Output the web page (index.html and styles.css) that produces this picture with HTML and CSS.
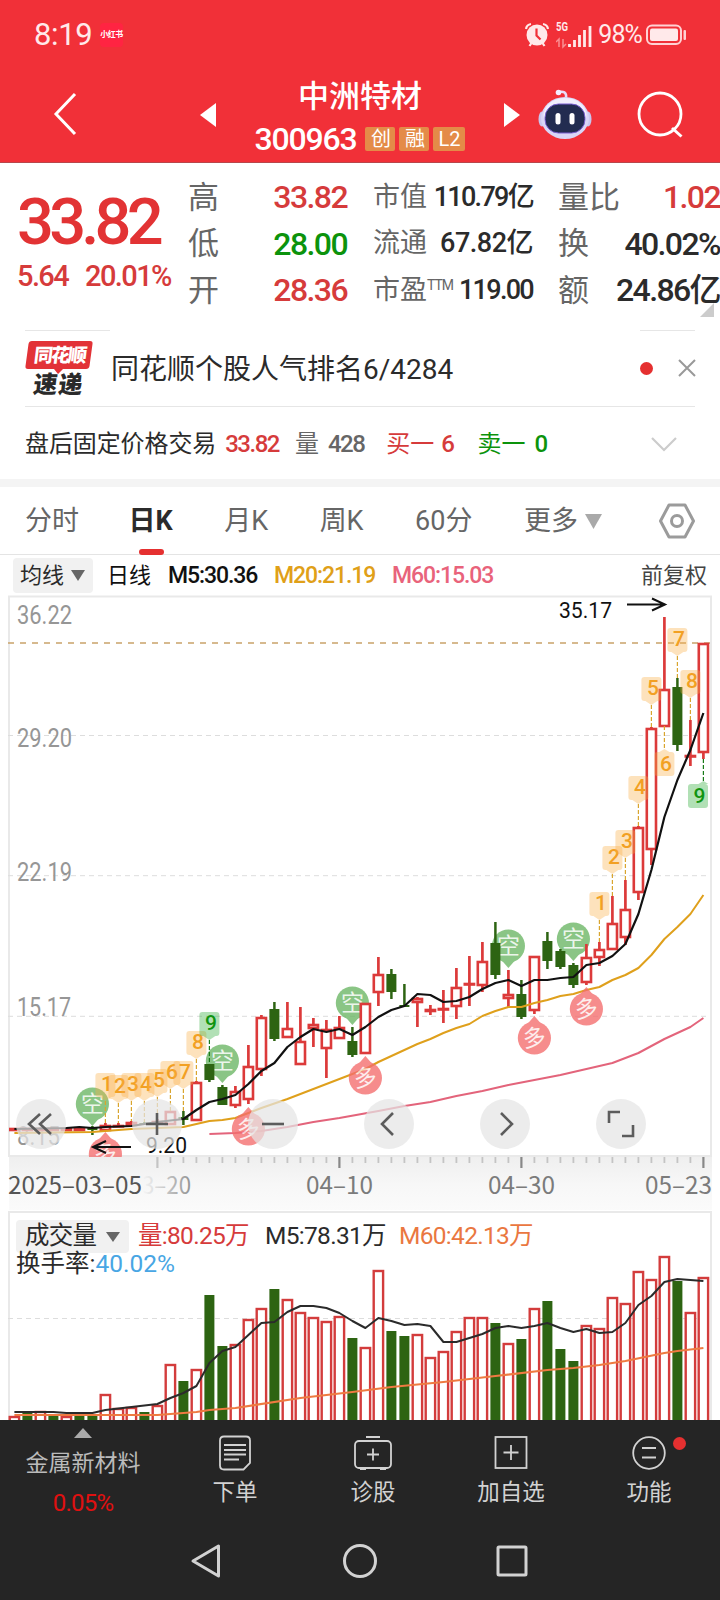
FILE: index.html
```
<!DOCTYPE html>
<html lang="zh-CN">
<head>
  <meta charset="UTF-8" />
  <meta name="viewport" content="width=device-width, initial-scale=1.0" />
  <title>中洲特材 300963</title>
  <link rel="stylesheet" href="styles.css">
</head>
<body>
  <!-- Header -->
  <header class="header">
    <div class="status">
      <span class="clock">8:19</span>
      <span class="app-badge">小红书</span>
      <svg class="alarm" width="24" height="30" viewBox="0 0 24 30">
        <circle cx="12" cy="15" r="10.5" fill="#ffe9ea"/>
        <path d="M1 9a6 6 0 0 1 5-5M23 9a6 6 0 0 0-5-5M4.500 26l2-3M19.500 26l-2-3" stroke="#ffe9ea" stroke-width="2.200" fill="none"/>
        <path d="M11.500 8.500v7l4 4" stroke="#f13038" stroke-width="2.200" fill="none"/>
      </svg>
      <svg class="signal" width="36" height="32" viewBox="0 0 36 32">
        <text x="0" y="12" font-size="13" font-weight="700" fill="#ffe9ea" textLength="12" lengthAdjust="spacingAndGlyphs">5G</text>
        <path d="M3 28v-8l-3 3M7 20v8l3-3" stroke="#f98e92" stroke-width="1.500" fill="none"/>
        <path d="M13.500 28v-3M18.500 28v-7M23.500 28v-12M28.500 28V11M34 28V7" stroke="#ffe9ea" stroke-width="2.800"/>
      </svg>
      <span class="battery-text">98%</span>
      <svg width="42" height="22" viewBox="0 0 42 22">
        <rect x="2" y="1.500" width="34" height="18.500" rx="5" fill="none" stroke="#ffd2d4" stroke-width="2"/>
        <rect x="5" y="4.500" width="28" height="12.500" rx="2" fill="#ffe9ea"/>
        <rect x="38.500" y="6" width="2.500" height="10" rx="1" fill="#ffd2d4"/>
      </svg>
    </div>
    <div class="title-bar">
      <svg class="back" width="24" height="44" viewBox="0 0 24 44"><path d="M22 2L3 22l19 20" fill="none" stroke="#fff" stroke-width="3"/></svg>
      <svg class="prev" width="16" height="24" viewBox="0 0 16 24"><path d="M0 12L16 0v24z" fill="#fff"/></svg>
      <div class="stock">
        <div class="stock-name">中洲特材</div>
        <div class="stock-code">300963<i>创</i><i>融</i><i>L2</i></div>
      </div>
      <svg class="next" width="16" height="24" viewBox="0 0 16 24"><path d="M16 12L0 0v24z" fill="#fff"/></svg>
      <svg class="robot" width="56" height="52" viewBox="0 0 56 52">
        <path d="M28 10C29 4 25 3 21 4" fill="none" stroke="#e9dcf8" stroke-width="2.500"/>
        <circle cx="20.500" cy="4.500" r="2.800" fill="#f4ecff"/>
        <ellipse cx="4" cy="31" rx="3.500" ry="7.500" fill="#c9c6ee"/>
        <ellipse cx="50" cy="31" rx="3.500" ry="7.500" fill="#c9c6ee"/>
        <ellipse cx="27" cy="30" rx="24" ry="21" fill="#d9d5f6"/>
        <ellipse cx="27" cy="27" rx="21.500" ry="17" fill="#f1effd"/>
        <rect x="7" y="16" width="40" height="29" rx="13.500" fill="#222c50" stroke="#7a5fd0" stroke-width="1"/>
        <rect x="17.500" y="25" width="5" height="11.500" rx="2.500" fill="#fff"/>
        <rect x="31.500" y="25" width="5" height="11.500" rx="2.500" fill="#fff"/>
      </svg>
      <svg class="search" width="48" height="48" viewBox="0 0 48 48"><circle cx="24" cy="23" r="21" fill="none" stroke="#fff" stroke-width="2.800"/><path d="M36 37l9.500 8.500" stroke="#fff" stroke-width="3"/></svg>
    </div>
  </header>

  <!-- Quote -->
  <section class="quote">
    <div class="price-box">
      <div class="price">33.82</div>
      <div class="change"><span>5.64</span><span>20.01%</span></div>
    </div>
    <dl class="col col-a">
      <dt>高</dt><dd class="red">33.82</dd>
      <dt>低</dt><dd class="green">28.00</dd>
      <dt>开</dt><dd class="red">28.36</dd>
    </dl>
    <dl class="col col-b">
      <dt>市值</dt><dd>110.79亿</dd>
      <dt>流通</dt><dd class="wide">67.82亿</dd>
      <dt>市盈<sup>TTM</sup></dt><dd>119.00</dd>
    </dl>
    <dl class="col col-c">
      <dt>量比</dt><dd class="red">1.02</dd>
      <dt>换</dt><dd>40.02%</dd>
      <dt>额</dt><dd>24.86亿</dd>
    </dl>
    <span class="corner"></span>
  </section>

  <!-- News ticker -->
  <section class="notice">
    <svg class="logo" width="68" height="56" viewBox="0 0 68 56">
      <path d="M7 1h58q3 0 2.500 3l-3 22q-.5 3-3.500 3H38l-5 5-4-5H3q-3 0-2.500-3l3-22Q4 1 7 1z" fill="#e23237"/>
      <g font-weight="900" transform="skewX(-7)">
        <text x="11" y="22.500" font-size="19" fill="#fff" textLength="53">同花顺</text>
        <text x="14" y="53" font-size="24" fill="#2a2a2a" textLength="49">速递</text>
      </g>
    </svg>
    <span class="notice-text">同花顺个股人气排名6/4284</span>
    <span class="dot"></span>
    <svg width="18" height="18" viewBox="0 0 18 18"><path d="M1 1l16 16M17 1L1 17" stroke="#999" stroke-width="2"/></svg>
  </section>

  <section class="after-hours">
    <span class="ah-title">盘后固定价格交易</span>
    <b class="red ah-price">33.82</b>
    <span class="grey">量</span><b class="grey ah-vol">428</b>
    <span class="red">买一</span><b class="red ah-buy">6</b>
    <span class="green">卖一</span><b class="green">0</b>
    <svg width="26" height="15" viewBox="0 0 26 15"><path d="M1 1l12 12L25 1" fill="none" stroke="#ccc" stroke-width="2.200"/></svg>
  </section>

  <!-- Period tabs -->
  <nav class="tabs">
    <span>分时</span>
    <span class="active">日K</span>
    <span>月K</span>
    <span>周K</span>
    <span>60分</span>
    <span class="more">更多<svg width="17" height="15" viewBox="0 0 17 15"><path d="M0 0h17L8.500 15z" fill="#a9a9a9"/></svg></span>
    <svg width="36" height="36" viewBox="0 0 36 36"><path d="M10 2h16l8.500 16L26 34H10L1.500 18z" fill="none" stroke="#9b9b9b" stroke-width="3" stroke-linejoin="round"/><circle cx="18" cy="18" r="5.500" fill="none" stroke="#9b9b9b" stroke-width="3"/></svg>
  </nav>

  <div class="legend">
    <span class="select">均线<svg width="14" height="11" viewBox="0 0 14 11"><path d="M0 0h14L7 11z" fill="#666"/></svg></span>
    <span class="l-day">日线</span>
    <span class="l-m5">M5:30.36</span>
    <span class="l-m20">M20:21.19</span>
    <span class="l-m60">M60:15.03</span>
    <span class="l-adj">前复权</span>
  </div>

  <svg id="kline" width="720" height="616" viewBox="0 594 720 616"></svg>

  <div class="volume">
    <svg id="volChart" width="720" height="210" viewBox="0 1210 720 210"></svg>
    <div class="vol-legend">
      <span class="select">成交量<svg width="14" height="10" viewBox="0 0 14 10"><path d="M0 0h14L7 10z" fill="#666"/></svg></span>
      <span class="v-now">量:80.25万</span>
      <span class="v-m5">M5:78.31万</span>
      <span class="v-m60">M60:42.13万</span>
      <div class="turnover">换手率:<em>40.02%</em></div>
    </div>
  </div>

  <!-- Bottom bar -->
  <footer class="footer">
    <div class="actions">
      <div class="sector">
        <svg width="18" height="10" viewBox="0 0 18 10"><path d="M9 0l9 10H0z" fill="#aaa"/></svg>
        <span>金属新材料</span>
        <span class="pct">0.05%</span>
      </div>
      <div class="action">
        <svg width="36" height="36" viewBox="0 0 36 36"><path d="M7 1.500h22q4 0 4 4V28l-6.500 6.500H7q-4 0-4-4v-25q0-4 4-4z"/><path d="M7 10h22M7 15h22M7 19.500h22M7 24.500h15"/></svg>
        下单
      </div>
      <div class="action">
        <svg width="38" height="36" viewBox="0 0 38 36"><rect x="1" y="6" width="36" height="27" rx="4"/><path d="M12 2h14M19 13.500v12M13 19.500h12M6 34h6M26 34h6"/></svg>
        诊股
      </div>
      <div class="action">
        <svg width="34" height="36" viewBox="0 0 34 36"><rect x="1.500" y="2" width="31" height="31"/><path d="M17 10v15M9.500 17.500h15"/></svg>
        加自选
      </div>
      <div class="action">
        <svg width="34" height="36" viewBox="0 0 34 36"><circle cx="17" cy="18" r="15.800"/><path d="M10 13h14M10 22.500h14"/></svg>
        功能
        <i class="red-dot"></i>
      </div>
    </div>
    <div class="sysnav">
      <svg width="32" height="36" viewBox="0 0 32 36"><path d="M28.500 3v30L3 18z"/></svg>
      <svg width="36" height="36" viewBox="0 0 36 36"><circle cx="19" cy="18" r="15.500"/></svg>
      <svg width="32" height="36" viewBox="0 0 32 36"><rect x="2" y="4" width="28" height="28" rx="1"/></svg>
    </div>
  </footer>

  <script>
    const RED = '#dc3a3a', GREEN = '#2d6412';
    const cx = i => 14.4 + 13 * i;

    // [color, high, body top, body bottom, low]
    const candles = [
      ['r',1128,1128,1130,1131],['r',1128,1128,1130,1130],['r',1128,1128,1130,1130],['r',1128,1128,1130,1130],
      ['r',1128,1128,1130,1130],['r',1127,1128,1130,1130],['g',1126,1127,1130,1135],['r',1123,1125,1130,1131],
      ['r',1123,1125,1126,1127],['r',1121,1122,1125,1126],['g',1122,1123,1125,1125],['r',1119,1121,1123,1124],
      ['r',1111,1111,1124,1125],['g',1111,1117,1120,1125],['r',1081,1082,1120,1120],['g',1064,1064,1080,1082],
      ['g',1085,1087,1105,1105],['r',1086,1091,1105,1108],['r',1045,1066,1099,1104],['r',1015,1017,1069,1076],
      ['g',1002,1009,1039,1041],['r',1002,1028,1037,1037],['r',1007,1041,1064,1064],['r',1018,1024,1028,1047],
      ['r',1020,1029,1048,1078],['r',1016,1027,1038,1039],['g',1027,1041,1055,1057],['r',1003,1003,1053,1053],
      ['r',957,974,992,1006],['g',969,974,992,999],['g',984,1005,1007,1007],['r',997,998,1002,1027],
      ['r',1005,1009,1011,1015],['r',990,1008,1008,1023],['r',968,987,1006,1019],['r',956,983,983,1006],
      ['r',942,961,985,992],['g',922,943,975,979],['r',970,994,998,1007],['g',980,994,1017,1019],
      ['r',956,956,1010,1014],['g',932,941,961,969],['g',949,951,967,969],['g',963,965,985,988],
      ['r',944,957,982,985],['r',942,949,957,966],['r',896,923,949,949],['r',880,909,937,945],
      ['r',826,827,892,900],['r',727,728,849,865],['r',617,689,726,726],['g',678,687,745,751],
      ['r',720,755,755,766],['r',643,643,752,759]
    ];

    const volumes = [
      1416,1413,1411,1415,1416,1415,1414,1394,1408,1407,1412,1405,1364,1381,1369,1295,1346,1344,
      1319,1308,1289,1299,1312,1317,1321,1316,1338,1347,1270,1331,1336,1334,1357,1351,1331,1317,
      1317,1323,1343,1339,1308,1301,1349,1361,1325,1328,1297,1303,1271,1279,1256,1281,1312,1277
    ];
    const volGreen = [1,3,5,6,10,13,15,16,20,26,29,30,37,39,41,42,43,51];

    // Moving averages, [index, y]
    const ma5 = [[0,1129],[4,1128],[5,1127],[6,1128],[7,1127],[9,1126],[11,1122],[13,1119],[14,1110],[15,1102],[16,1099],
      [17,1095],[18,1084],[19,1071],[20,1063],[21,1047],[22,1037],[23,1029],[24,1032],[25,1029],[26,1035],[27,1027],
      [28,1017],[29,1010],[30,1006],[31,994],[32,995],[33,1002],[34,1001],[35,997],[36,989],[37,983],[38,980],[39,986],
      [40,980],[41,980],[42,978],[43,977],[44,965],[45,963],[46,956],[47,944],[48,914],[49,870],[50,817],[51,780],[52,750],[53,713]];
    const ma20 = [[0,1133],[6,1132],[9,1129],[13,1127],[14,1124],[15,1121],[16,1120],[17,1118],[18,1113],[19,1108],[21,1099],
      [23,1089],[25,1079],[27,1069],[28,1062],[29,1056],[30,1050],[31,1044],[32,1039],[33,1033],[34,1028],[35,1024],
      [36,1016],[37,1011],[38,1007],[39,1007],[40,1003],[41,1000],[42,996],[43,994],[44,990],[45,987],[46,980],[47,975],
      [48,968],[49,955],[50,939],[51,927],[52,914],[53,895]];
    const ma60 = [[15,1134],[17,1133],[19,1131],[21,1127],[23,1122],[25,1118],[28,1111],[30,1106],[32,1102],[34,1096],
      [36,1091],[38,1085],[40,1080],[42,1075],[44,1069],[46,1063],[48,1053],[50,1039],[52,1027],[53,1018]];
    const vma5 = [[0,1412],[3,1412],[4,1413],[6,1413],[7,1410],[9,1407],[11,1404],[12,1398],[13,1393],[14,1386],[15,1363],
      [16,1351],[17,1347],[18,1335],[19,1323],[20,1322],[21,1312],[22,1306],[23,1306],[24,1308],[25,1313],[26,1321],
      [27,1328],[28,1318],[29,1321],[30,1325],[31,1324],[32,1326],[33,1342],[34,1342],[35,1338],[36,1334],[37,1328],
      [38,1326],[39,1328],[40,1326],[41,1323],[42,1328],[43,1332],[44,1329],[45,1333],[46,1332],[47,1323],[48,1305],
      [49,1296],[50,1282],[51,1279],[53,1281]];
    const vma60 = [[0,1415],[11,1415],[14,1412],[15,1410],[17,1408],[22,1398],[26,1392],[29,1387],[33,1382],[37,1376],
      [41,1370],[43,1368],[45,1365],[47,1361],[50,1353],[51,1351],[53,1348]];

    // Sequence tags: [index, digit, top, below candle]
    const tags = [[7,1,1073],[8,2,1075],[9,3,1073],[10,4,1073],[11,5,1069],[12,6,1061],[13,7,1061],[14,8,1031],[15,9,1012],
      [45,1,892],[46,2,846],[47,3,830],[48,4,776],[49,5,677],[50,6,752,1],[51,7,628],[52,8,670],[53,9,784,1]];
    const pins = [[6,'空',1104],[16,'空',1061],[26,'空',1003],[38,'空',946],[43,'空',939],
      [7,'多',1154],[18,'多',1129],[27,'多',1078],[40,'多',1038],[44,'多',1009]];

    const text = (x, y, w, size, fill, s, extra = '') =>
      `<text x="${x}" y="${y}" font-size="${size}" fill="${fill}" textLength="${w}" lengthAdjust="spacingAndGlyphs" ${extra}>${s}</text>`;
    const line = (pts, color, w = 2) =>
      `<polyline points="${pts.map(p => cx(p[0]) + ',' + p[1]).join(' ')}" fill="none" stroke="${color}" stroke-width="${w}" stroke-linejoin="round"/>`;
    const hline = (y, color, dash, w = 1) =>
      `<path d="M8 ${y}H710" stroke="${color}" stroke-width="${w}" stroke-dasharray="${dash}"/>`;

    function drawCandle([c, hi, top, bot, lo], i) {
      const x = cx(i);
      if (c === 'g') {
        return `<path d="M${x} ${hi}V${lo}" stroke="${GREEN}" stroke-width="2.500"/>
          <rect x="${x - 5}" y="${top}" width="10" height="${bot - top}" fill="${GREEN}"/>`;
      }
      return `<path d="M${x} ${hi}V${top}M${x} ${bot}V${lo}" stroke="${RED}" stroke-width="2.700"/>
        <rect x="${x - 4.6}" y="${top + 1}" width="9.200" height="${Math.max(bot - top - 1, 0.5)}" fill="${bot - top < 3 ? RED : '#fff'}" stroke="${RED}" stroke-width="2.600"/>`;
    }

    function drawTag([i, n, top, below]) {
      const c = n === 9 ? '#109410' : '#f2a023';
      const bg = n === 9 ? 'rgba(40,170,50,.36)' : 'rgba(250,175,70,.36)';
      const x = cx(i), bx = Math.min(x - 10, 688);
      const stem = below ? `M${x} ${candles[i][4]}V${top - 2}` : `M${x} ${top + 28}V${candles[i][1]}`;
      const tail = below ? `M${x - 5} ${top}l5-3 5 3z` : `M${x - 6} ${top + 24}h12l-6 4z`;
      return `<path d="${stem}" stroke="${n === 9 ? '#187a18' : '#d9a52f'}" stroke-width="1.200" stroke-dasharray="4 2"/>
        <rect x="${bx}" y="${top}" width="20" height="24" rx="3" fill="${bg}"/><path d="${tail}" fill="${bg}"/>
        <text x="${bx + 11.5}" y="${top + (below ? 19 : 18)}" font-size="21" font-weight="500" text-anchor="middle" fill="${c}">${n}</text>`;
    }

    function drawPin([i, s, y]) {
      const x = cx(i), up = s === '多';
      const c = up ? '#f46d6d' : '#6ab663';
      const tail = up ? `M${x - 7} ${y - 14}L${x} ${y - 22}l7 8z` : `M${x - 7} ${y + 14}L${x} ${y + 22}l7-8z`;
      return `<g opacity=".78"><circle cx="${x}" cy="${y}" r="16.600" fill="${c}"/><path d="${tail}" fill="${c}"/>
        <text x="${x}" y="${y + 8}" font-size="23" text-anchor="middle" fill="#fff" fill-opacity=".85" ${up ? `transform="rotate(-8 ${x} ${y})"` : ''}>${s}</text></g>`;
    }

    function drawKline() {
      let s = `<defs><linearGradient id="band" x1="0" y1="0" x2="0" y2="1"><stop offset="0" stop-color="#efefef"/><stop offset=".5" stop-color="#f7f7f7"/><stop offset="1" stop-color="#fbfbfb"/></linearGradient>
        <linearGradient id="fade"><stop offset="0" stop-color="#888" stop-opacity="0"/><stop offset=".28" stop-color="#888" stop-opacity=".25"/><stop offset="1" stop-color="#888" stop-opacity=".9"/></linearGradient>
        <clipPath id="plot"><rect x="9" y="596" width="702" height="561"/></clipPath></defs>`;
      s += '<rect x="9" y="1157" width="703" height="55" fill="url(#band)"/>';
      s += '<rect x="9" y="596.500" width="702" height="559.500" fill="#fff" stroke="#e9e9e9" stroke-width="2"/>';
      s += hline(735.5, '#ddd', '5 4') + hline(875.7, '#ddd', '5 4') + hline(1016.3, '#ddd', '5 4');
      s += hline(643, '#c9a26a', '6 6', 1.6);
      s += [['36.22',624,55],['29.20',747,55],['22.19',881,55],['15.17',1016,54],['8.15',1145,43]]
        .map(([t, y, w]) => text(17, y, w, 25, '#969696', t)).join('');
      s += `<g clip-path="url(#plot)">${pins.slice(0, 5).map(drawPin).join('')}${candles.map(drawCandle).join('')}`;
      s += line(ma20, '#dfa01c') + line(ma60, '#e3647b') + line(ma5, '#111', 2.2);
      s += pins.slice(5).map(drawPin).join('') + tags.map(drawTag).join('') + '</g>';
      s += text(559, 618, 53, 22, '#111', '35.17') + text(146, 1153, 41, 22, '#111', '9.20');
      s += '<path d="M627 604.500h37M652 598.500l13 6-13 6M131 1147H93M106 1141l-13 6 13 6" fill="none" stroke="#111" stroke-width="2"/>';

      // Round chart controls
      const icons = ['M-1-10l-11 10 11 10M10-10l-11 10 11 10', 'M-11 0h22M0-11v22', 'M-11 0h22',
        'M4-11l-11 11 11 11', 'M-4-11l11 11-11 11', 'M-12-1v-11h11M12 1v11h-11'];
      s += icons.map((d, i) => `<g transform="translate(${41 + 116 * i} 1124)"><circle r="25" fill="rgba(228,228,228,.72)"/>
        <path d="${d}" fill="none" stroke="#5c5c5c" stroke-width="2.600"/></g>`).join('');

      // Date axis
      for (let i = 11; i < 54; i++) {
        const major = (i - 11) % 14 === 0;
        s += `<path d="M${cx(i)} 1157v${major ? 11 : 6}" stroke="${major && i > 11 ? '#888' : '#c4c4c4'}" stroke-width="${major ? 2.2 : 1.8}"/>`;
      }
      s += '<g class="dates">' + text(8, 1194, 134, 24, '#555', '2025–03–05');
      s += text(142, 1194, 49, 24, 'url(#fade)', '3–20');
      s += text(306, 1194, 67, 24, '#7b7b7b', '04–10') + text(488, 1194, 67, 24, '#7b7b7b', '04–30') + text(645, 1194, 67, 24, '#7b7b7b', '05–23') + '</g>';
      document.getElementById('kline').innerHTML = s;
    }

    function drawVolume() {
      let s = '<rect x="9" y="1212" width="702" height="230" fill="#fff" stroke="#e9e9e9" stroke-width="2"/>' + hline(1318.5, '#ddd', '5 4');
      s += volumes.map((y, i) => volGreen.includes(i)
        ? `<rect x="${cx(i) - 5}" y="${y}" width="10" height="${1420 - y}" fill="${GREEN}"/>`
        : `<rect x="${cx(i) - 4.7}" y="${y + 1}" width="9.400" height="${1430 - y}" fill="#fff" stroke="#d33c3c" stroke-width="2.400"/>`).join('');
      s += line(vma5, '#2b2b2b') + line(vma60, '#ee7a41', 2.2);
      document.getElementById('volChart').innerHTML = s;
    }

    drawKline();
    drawVolume();
  </script>
</body>
</html>
```
FILE: styles.css
```
* {
  box-sizing: border-box;
}

body {
  width: 720px;
  margin: 0;
  background: #fff;
  color: #2b2b2b;
  font-family: Roboto, "Noto Sans CJK SC", sans-serif;
  line-height: 1;
  overflow: hidden;
}

svg {
  display: block;
  flex: none;
}

span, b, dt, dd {
  white-space: nowrap;
}

b {
  font-weight: 500;
}

i, em {
  font-style: normal;
}

.red { color: #d63b3b !important; }
.green { color: #0c930c !important; }
.grey { color: #666; }

/* Header */
.header {
  height: 163px;
  background: #f13038;
  color: #fff;
  border-bottom: 1px solid #b8474b;
}

.status {
  display: flex;
  align-items: center;
  height: 69px;
  padding: 0 33px 0 34px;
  color: #ffe9ea;
}

.clock {
  width: 66px;
  font-size: 31px;
  letter-spacing: -0.4px;
}

.app-badge {
  width: 23px;
  height: 24px;
  border-radius: 4px;
  background: #ff2442;
  color: #fff;
  font-size: 8px;
  font-weight: 700;
  line-height: 24px;
  text-align: center;
  letter-spacing: -0.5px;
}

.alarm {
  margin-left: auto;
  margin-right: 7px;
}

.battery-text {
  margin: 0 3px 0 6px;
  font-size: 25px;
  letter-spacing: -0.9px;
}

.title-bar {
  display: flex;
  height: 93px;
  padding: 0 36px 0 53px;
}

.back { margin-top: 23px; }
.prev { margin: 34px 0 0 123px; }

.stock {
  width: 288px;
  text-align: center;
}

.stock-name {
  margin-top: 12px;
  font-size: 31px;
  font-weight: 500;
}

.stock-code {
  display: flex;
  justify-content: center;
  align-items: center;
  gap: 4px;
  margin-top: 14px;
  font-size: 32px;
  font-weight: 500;
  line-height: 26px;
  letter-spacing: -1.2px;
}

.stock-code i {
  width: 30px;
  height: 24px;
  border-radius: 2px;
  background: #e48b48;
  font-size: 20px;
  font-weight: 400;
  line-height: 25px;
}

.stock-code i:first-of-type { margin-left: 5px; }
.stock-code i:last-of-type { width: 32px; letter-spacing: 0; }

.next { margin-top: 34px; }
.robot { margin: 19px 0 0 18px; }
.search { margin: 22px 0 0 auto; }

/* Quote */
.quote {
  position: relative;
  display: flex;
  height: 167px;
  padding-top: 11px;
}

.price-box {
  width: 188px;
  padding-left: 17px;
  color: #e23334;
}

.price {
  margin-top: 16px;
  font-size: 65px;
  font-weight: 500;
  letter-spacing: -4.8px;
}

.change {
  display: flex;
  gap: 17px;
  margin-top: 7px;
  font-size: 29px;
  font-weight: 500;
  letter-spacing: -1.6px;
  color: #d63b3b;
}

.col {
  display: grid;
  grid-template-columns: auto minmax(0, 1fr);
  grid-auto-rows: 46.5px;
  align-items: center;
  margin: 0;
  font-size: 31px;
}

.col dt { color: #666; }

.col dd {
  margin: 0;
  justify-self: end;
  font-size: 32px;
  font-weight: 500;
  letter-spacing: -1.6px;
}

.col-a { width: 159px; }

.col-b {
  width: 160px;
  margin-left: 26px;
  font-size: 27px;
}

.col-b dd {
  font-size: 27px;
  letter-spacing: -1.7px;
}

.col-b .wide { letter-spacing: -0.5px; }

.col-b sup {
  font-size: 14px;
  line-height: 0;
  letter-spacing: -1px;
  vertical-align: 9px;
}

.col-c {
  width: 162px;
  margin-left: 25px;
}

.corner {
  position: absolute;
  right: 6px;
  bottom: 13px;
  border-left: 14px solid transparent;
  border-bottom: 14px solid #ccc;
}

/* Notice */
.notice {
  display: flex;
  align-items: center;
  height: 77px;
  margin: 0 25px;
  border-bottom: 1px solid #e6e6e6;
  background: linear-gradient(#e6e6e6, #e6e6e6) 0 0 / 85px 1px no-repeat,
    linear-gradient(#e6e6e6, #e6e6e6) 100% 0 / 55px 1px no-repeat;
}

.notice-text {
  margin-left: 18px;
  padding-top: 3px;
  font-size: 28px;
  line-height: 32px;
}

.dot {
  width: 13px;
  height: 13px;
  margin: 0 25px 0 auto;
  border-radius: 50%;
  background: #e53030;
}

.notice svg:last-child { margin-right: -1px; }

.after-hours {
  display: flex;
  align-items: center;
  height: 80px;
  padding: 2px 43px 0 25px;
  border-bottom: 8px solid #f4f4f4;
  font-size: 24px;
}

.after-hours b { margin-left: 9px; letter-spacing: -1.5px; }
.after-hours .ah-price { margin-right: 16px; }
.after-hours .ah-vol { margin-right: 22px; }
.after-hours .ah-buy { margin: 0 24px 0 7px; }
.after-hours svg { margin-left: auto; }
.ah-title { letter-spacing: -0.1px; }

/* Tabs */
.tabs {
  display: flex;
  align-items: center;
  height: 68px;
  padding: 0 25px;
  border-bottom: 1px solid #e4e4e4;
  font-size: 27px;
  color: #666;
}

.tabs span {
  position: relative;
  top: 1px;
  margin-right: 51.5px;
}

.tabs .active {
  margin-left: -2px;
  color: #2b2b2b;
  font-weight: 700;
}

.tabs .active::after {
  content: "";
  position: absolute;
  left: 10px;
  bottom: -20px;
  width: 25px;
  height: 6px;
  border-radius: 3px;
  background: #e53030;
}

.tabs .more {
  display: flex;
  align-items: center;
  gap: 7px;
  margin-right: auto;
}

.legend {
  display: flex;
  align-items: center;
  height: 39px;
  padding: 2px 13px 0;
  font-size: 22px;
  color: #111;
}

.select {
  display: flex;
  align-items: center;
  justify-content: space-between;
  background: #f1f1f1;
  border-radius: 4px;
  color: #2b2b2b;
}

.legend .select {
  width: 80px;
  height: 35px;
  padding: 0 8px 0 7px;
  margin-right: 14px;
}

.l-m5, .l-m20, .l-m60 {
  font-size: 23px;
  font-weight: 500;
  letter-spacing: -1.1px;
}

.legend .l-day { margin-right: 17px; }
.legend .l-m5 { width: 106px; }
.legend .l-m20 { width: 118px; color: #e0a018; }
.legend .l-m60 { color: #e9637b; }
.legend .l-adj { margin-left: auto; color: #444; }

.dates {
  font-family: "Noto Sans CJK SC", sans-serif;
}

/* Volume */
.volume {
  position: relative;
  height: 210px;
}

.vol-legend {
  position: absolute;
  left: 16px;
  top: 10px;
  display: flex;
  flex-wrap: wrap;
  align-items: center;
  width: 600px;
  font-size: 24.5px;
  letter-spacing: -0.7px;
}

.vol-legend .select {
  width: 113px;
  height: 33px;
  padding: 0 9px 0 9px;
  margin-right: 9px;
}

.v-now { width: 127px; color: #d63b3b; }
.v-m5 { width: 134px; }
.v-m60 { color: #ea7740; }

.turnover {
  width: 100%;
  margin-top: -1px;
  line-height: 24px;
  letter-spacing: 0;
}

.turnover em { color: #48a6e4; }

/* Footer */
.footer {
  height: 180px;
  background: #252525;
  color: #d2d2d2;
}

.actions {
  display: flex;
  height: 104px;
}

.sector {
  display: flex;
  flex-direction: column;
  align-items: center;
  width: 166px;
  padding-top: 8px;
  font-size: 23px;
  color: #bbb;
}

.sector span { margin-top: 14px; }
.sector .pct { margin-top: 16px; color: #e01010; font-size: 24px; letter-spacing: -0.8px; }

.action {
  position: relative;
  display: flex;
  flex-direction: column;
  align-items: center;
  gap: 10px;
  width: 138px;
  padding-top: 15px;
  font-size: 22.5px;
}

.action svg {
  fill: none;
  stroke: #d2d2d2;
  stroke-width: 1.800;
}

.red-dot {
  position: absolute;
  top: 17px;
  right: 32px;
  width: 13px;
  height: 13px;
  border-radius: 50%;
  background: #e53030;
}

.sysnav {
  display: flex;
  gap: 119px;
  padding: 19px 0 0 190px;
}

.sysnav svg {
  fill: none;
  stroke: #d2d2d2;
  stroke-width: 3;
  stroke-linejoin: round;
}
```
